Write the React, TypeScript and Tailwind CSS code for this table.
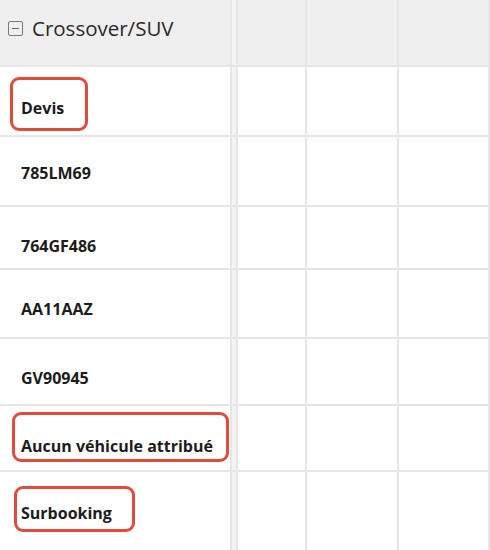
const rows: { label: string; height: string; pad: string; box?: string }[] = [
  { label: "Devis", height: "h-[70px]", pad: "pt-[14px]", box: "left-[10px] top-[10px] h-[54px] w-[78px]" },
  { label: "785LM69", height: "h-[70px]", pad: "pt-[4px]" },
  { label: "764GF486", height: "h-[63px]", pad: "pt-[16px]" },
  { label: "AA11AAZ", height: "h-[69px]", pad: "pt-[10px]" },
  { label: "GV90945", height: "h-[67px]", pad: "pt-[12px]" },
  { label: "Aucun véhicule attribué", height: "h-[66px]", pad: "pt-[16px]", box: "left-[12px] top-[6px] h-[50px] w-[217px]" },
  { label: "Surbooking", height: "h-[80px]", pad: "pt-[4px]", box: "left-[14px] top-[14px] h-[46px] w-[121px]" },
];

function EmptyCells({ header }: { header?: boolean }) {
  const bg = header ? "bg-[#efefef]" : "bg-white";
  return (
    <>
      <div className="w-[6px] shrink-0 border-r-2 border-[#e6e6e6] bg-[#f4f4f4]" />
      <div className={`w-[69px] shrink-0 border-r-2 border-[#e6e6e6] ${bg}`} />
      <div className={`w-[92px] shrink-0 border-r-2 border-[#e6e6e6] ${bg}`} />
      <div className={`w-[91px] shrink-0 border-r-2 border-[#e6e6e6] ${bg}`} />
    </>
  );
}

export default function App() {
  return (
    <div className="h-[550px] w-[490px] overflow-hidden bg-white font-['Open_Sans','Lato',sans-serif] text-[#1c1c1c]">
      <div className="flex h-[67px] border-b-2 border-[#e6e6e6]">
        <div className="flex w-[232px] shrink-0 items-center gap-[9px] border-r-2 border-[#e6e6e6] bg-[#efefef] pb-[8px] pl-[8px]">
          <span className="flex h-[15px] w-[15px] items-center justify-center rounded-[2px] border-[1.5px] border-[#7a7a7a]">
            <span className="h-[1.5px] w-[7px] bg-[#6a6a6a]" />
          </span>
          <span className="text-[20.5px] text-[#2a2a2a]">Crossover/SUV</span>
        </div>
        <EmptyCells header />
      </div>
      {rows.map((row) => (
        <div key={row.label} className={`flex border-b-2 border-[#e6e6e6] ${row.height}`}>
          <div className={`relative flex w-[232px] shrink-0 items-center border-r-2 border-[#e6e6e6] pl-[21px] ${row.pad}`}>
            <span className="text-[16px] font-bold">{row.label}</span>
            {row.box && (
              <span
                className={`absolute rounded-[9px] border-[3px] border-[#e14b3b] ${row.box}`}
              />
            )}
          </div>
          <EmptyCells />
        </div>
      ))}
    </div>
  );
}
